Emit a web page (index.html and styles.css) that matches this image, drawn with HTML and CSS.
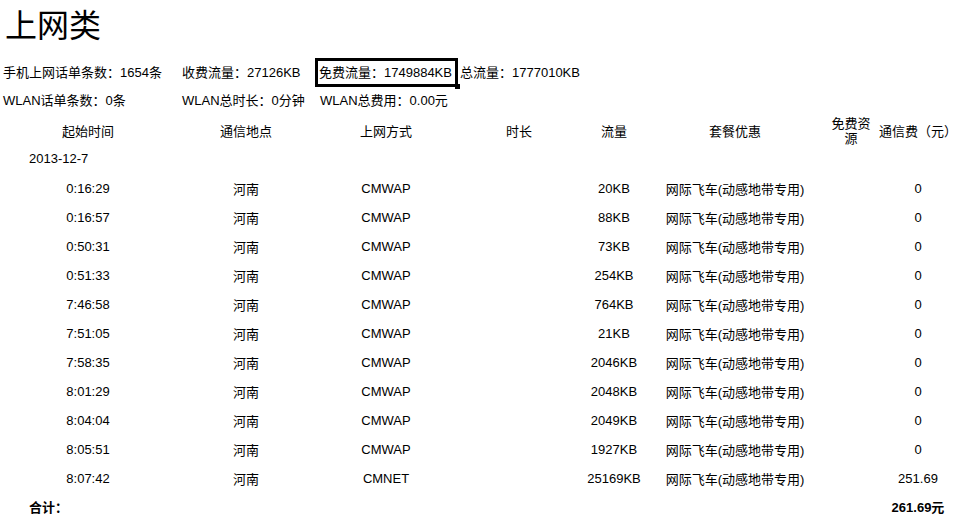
FILE: index.html
```html
<!DOCTYPE html>
<html lang="zh-CN">
<head>
<meta charset="utf-8">
<title>上网类</title>
<link rel="stylesheet" href="styles.css">
</head>
<body>
<h1 class="title">上网类</h1>
<div class="info">
  <div class="info-row">
    <span class="c1">手机上网话单条数：1654条</span>
    <span class="c2">收费流量：27126KB</span>
    <span class="c3 boxed">免费流量：1749884KB<i class="handle"></i></span>
    <span class="c4">总流量：1777010KB</span>
  </div>
  <div class="info-row second">
    <span class="c1">WLAN话单条数：0条</span>
    <span class="c2">WLAN总时长：0分钟</span>
    <span class="c3 plain">WLAN总费用：0.00元</span>
  </div>
</div>
<div class="table">
  <div class="row head">
    <div>起始时间</div><div>通信地点</div><div>上网方式</div><div>时长</div><div>流量</div><div>套餐优惠</div><div><span class="narrow">免费资源</span></div><div>通信费（元）</div>
  </div>
  <div class="row date"><div class="left">2013-12-7</div></div>
  <div class="rows">
    <div class="row"><div>0:16:29</div><div>河南</div><div>CMWAP</div><div></div><div>20KB</div><div>网际飞车(动感地带专用)</div><div></div><div>0</div></div>
    <div class="row"><div>0:16:57</div><div>河南</div><div>CMWAP</div><div></div><div>88KB</div><div>网际飞车(动感地带专用)</div><div></div><div>0</div></div>
    <div class="row"><div>0:50:31</div><div>河南</div><div>CMWAP</div><div></div><div>73KB</div><div>网际飞车(动感地带专用)</div><div></div><div>0</div></div>
    <div class="row"><div>0:51:33</div><div>河南</div><div>CMWAP</div><div></div><div>254KB</div><div>网际飞车(动感地带专用)</div><div></div><div>0</div></div>
    <div class="row"><div>7:46:58</div><div>河南</div><div>CMWAP</div><div></div><div>764KB</div><div>网际飞车(动感地带专用)</div><div></div><div>0</div></div>
    <div class="row"><div>7:51:05</div><div>河南</div><div>CMWAP</div><div></div><div>21KB</div><div>网际飞车(动感地带专用)</div><div></div><div>0</div></div>
    <div class="row"><div>7:58:35</div><div>河南</div><div>CMWAP</div><div></div><div>2046KB</div><div>网际飞车(动感地带专用)</div><div></div><div>0</div></div>
    <div class="row"><div>8:01:29</div><div>河南</div><div>CMWAP</div><div></div><div>2048KB</div><div>网际飞车(动感地带专用)</div><div></div><div>0</div></div>
    <div class="row"><div>8:04:04</div><div>河南</div><div>CMWAP</div><div></div><div>2049KB</div><div>网际飞车(动感地带专用)</div><div></div><div>0</div></div>
    <div class="row"><div>8:05:51</div><div>河南</div><div>CMWAP</div><div></div><div>1927KB</div><div>网际飞车(动感地带专用)</div><div></div><div>0</div></div>
    <div class="row"><div>8:07:42</div><div>河南</div><div>CMNET</div><div></div><div>25169KB</div><div>网际飞车(动感地带专用)</div><div></div><div>251.69</div></div>
  </div>
  <div class="row total">
    <div class="left">合计：</div><div></div><div></div><div></div><div></div><div></div><div></div><div>261.69元</div>
  </div>
</div>
</body>
</html>
```

FILE: styles.css
```css
html, body {
  margin: 0;
  padding: 0;
  background: #fff;
  overflow: hidden;
}
body {
  font-family: "Liberation Sans", "Noto Sans CJK SC", sans-serif;
  font-size: 13px;
  color: #000;
  width: 960px;
}
.title {
  margin: 0;
  height: 58px;
  padding-left: 5px;
  font-family: "Noto Sans CJK SC", serif;
  font-weight: 400;
  font-size: 32px;
  line-height: 46px;
  box-sizing: border-box;
}
.info-row {
  display: grid;
  grid-template-columns: 179px 133px 145px auto;
  padding-left: 3px;
  height: 29px;
  align-items: center;
}
.info-row.second {
  height: 28px;
}
.info-row span {
  white-space: nowrap;
  line-height: 16px;
}
.boxed {
  position: relative;
  border: 3px solid #000;
  height: 29px;
  box-sizing: border-box;
  padding-left: 1px;
  display: flex;
  align-items: center;
  width: 143px;
}
.plain {
  padding-left: 5px;
}
.c4 {
  padding-left: 0;
}
.handle {
  position: absolute;
  right: -5px;
  bottom: -5px;
  width: 5px;
  height: 5px;
  background: #000;
}
.row {
  display: grid;
  grid-template-columns: 176px 140px 140px 126px 64px 178px 54px 80px;
  align-items: center;
  text-align: center;
  height: 29px;
  white-space: nowrap;
}
.row.head {
  height: 30px;
  margin-top: 1px;
  line-height: 15px;
}
.narrow {
  display: inline-block;
  width: 42px;
  white-space: normal;
  line-height: 15px;
}
.row.date {
  height: 24px;
}
.rows {
  margin-top: 4px;
}
.left {
  text-align: left;
  padding-left: 29px;
}
.row.total {
  height: 27px;
  font-weight: bold;
}
```
